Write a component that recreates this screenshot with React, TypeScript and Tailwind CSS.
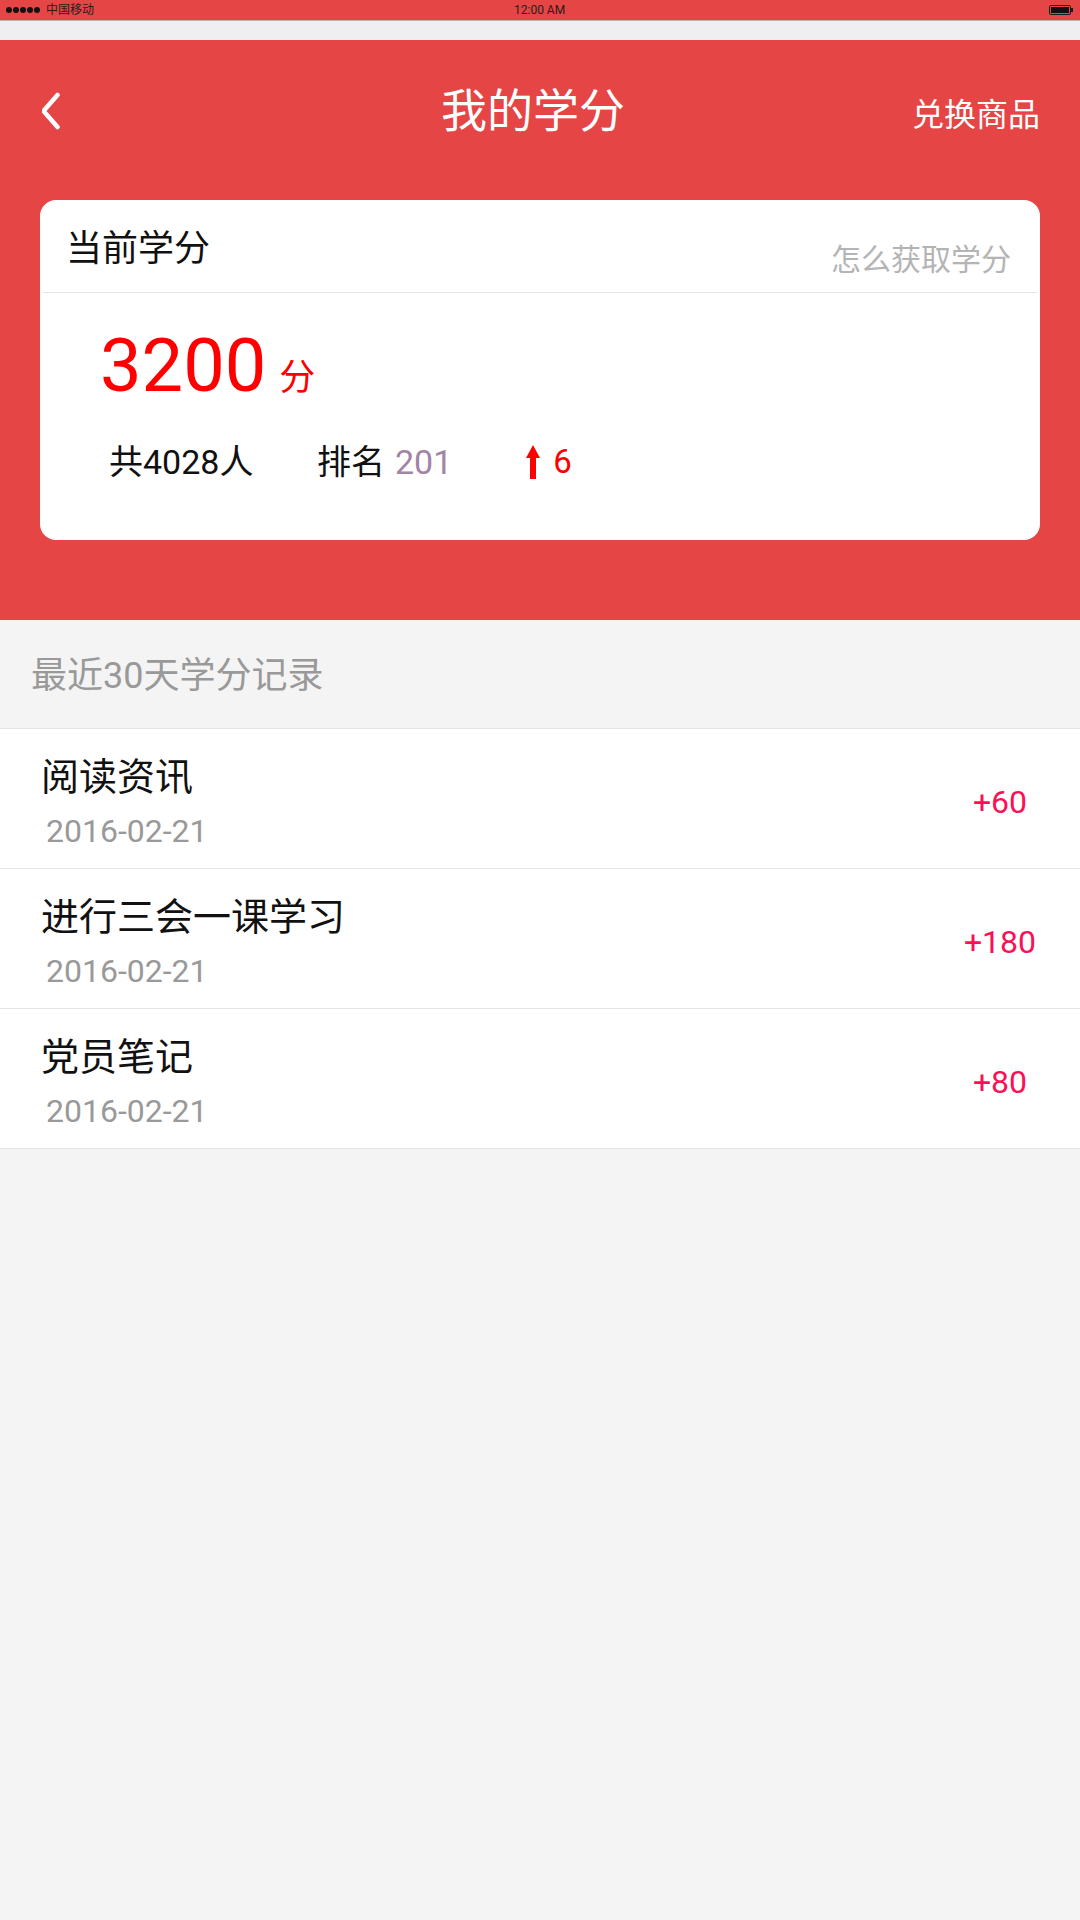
const records = [
  { title: '阅读资讯', date: '2016-02-21', points: '+60' },
  { title: '进行三会一课学习', date: '2016-02-21', points: '+180' },
  { title: '党员笔记', date: '2016-02-21', points: '+80' },
];

const fontStack = { fontFamily: 'Roboto, "Noto Sans CJK SC", sans-serif' };

function StatusBar() {
  return (
    <div className="relative flex h-[21px] items-center justify-between border-b border-[#b5b5b5] bg-[#e64545] pl-[6px] pr-[7px] text-[#2a1c1c]">
      <div className="flex items-center gap-[6px]">
        <div className="flex gap-px">
          {[0, 1, 2, 3, 4].map((i) => (
            <span key={i} className="h-[6px] w-[6px] rounded-full bg-[#111]" />
          ))}
        </div>
        <span className="text-[12px] leading-none">中国移动</span>
      </div>
      <span className="absolute left-[514px] top-[3px] text-[12px] leading-[14px]">12:00 AM</span>
      <svg width="24" height="10" viewBox="0 0 24 10">
        <rect x="0.5" y="0.5" width="21" height="9" rx="1.5" fill="none" stroke="#1c1c1c" />
        <rect x="2" y="2" width="18" height="6" fill="#111" />
        <rect x="22" y="3" width="2" height="4" fill="#1c1c1c" />
      </svg>
    </div>
  );
}

function Header() {
  return (
    <div className="relative flex h-[120px] items-center justify-between pl-[42px] pr-[40px] pt-[22px]">
      <svg width="24" height="38" viewBox="0 0 24 38" fill="none">
        <path d="M15.5 3 L1.5 19 L15.5 35" stroke="#fff" strokeWidth="4.5" strokeLinecap="round" strokeLinejoin="round" />
      </svg>
      <h1 className="absolute left-[441px] top-[39px] text-[46px] font-normal leading-[64px] text-white">我的学分</h1>
      <span className="mt-[8px] text-[32px] leading-[44px] text-white">兑换商品</span>
    </div>
  );
}

function ScoreCard() {
  return (
    <div className="mx-[40px] mt-[40px] h-[340px] rounded-[16px] bg-white">
      <div className="mx-[3px] flex h-[93px] justify-between border-b border-[#e3e3e3] pl-[23px] pr-[26px]">
        <span className="mt-[24px] text-[36px] leading-[50px] text-[#111]">当前学分</span>
        <span className="mt-[38px] text-[30px] leading-[44px] text-[#b4b4b4]">怎么获取学分</span>
      </div>
      <div className="ml-[60px] mt-[28px] flex items-end text-[#ff0000]">
        <span className="text-[74px] leading-[90px]">3200</span>
        <span className="mb-[8px] ml-[13px] text-[36px] leading-[50px]">分</span>
      </div>
      <div className="ml-[69px] mt-[27px] flex items-center text-[34px] leading-[48px] text-[#111]">
        <span className="w-[208px]">共4028人</span>
        <span>排名</span>
        <span className="ml-[10px] text-[#a184a6]">201</span>
        <svg className="ml-[74px]" width="14" height="34" viewBox="0 0 14 34">
          <path d="M7 0 L14 13 L10 13 L10 34 L4 34 L4 13 L0 13 Z" fill="#ff0000" />
        </svg>
        <span className="ml-[13px] text-[33px] text-[#ff0000]">6</span>
      </div>
    </div>
  );
}

function RecordRow({ title, date, points }: { title: string; date: string; points: string }) {
  return (
    <div className="relative flex h-[140px] items-center justify-between border-b border-[#e3e3e3] bg-white pl-[41px]">
      <div>
        <div className="mt-[6px] text-[38px] leading-[52px] text-[#111]">{title}</div>
        <div className="ml-[5px] mt-[6px] text-[32px] leading-[44px] text-[#999999]">{date}</div>
      </div>
      <div className="w-[160px] pt-[7px] text-center text-[32px] leading-[48px] text-[#fa1055]">{points}</div>
    </div>
  );
}

export default function App() {
  return (
    <div className="min-h-[1920px] bg-[#f4f4f4]" style={fontStack}>
      <StatusBar />
      <div className="h-[19px] bg-[#efeff1]" />
      <div className="h-[580px] bg-[#e64545]">
        <Header />
        <ScoreCard />
      </div>
      <div className="flex h-[108px] items-center pl-[31px] pt-[4px] text-[36px] text-[#999999]">最近30天学分记录</div>
      <div className="border-t border-[#e3e3e3]">
        {records.map((r) => (
          <RecordRow key={r.title} title={r.title} date={r.date} points={r.points} />
        ))}
      </div>
    </div>
  );
}
